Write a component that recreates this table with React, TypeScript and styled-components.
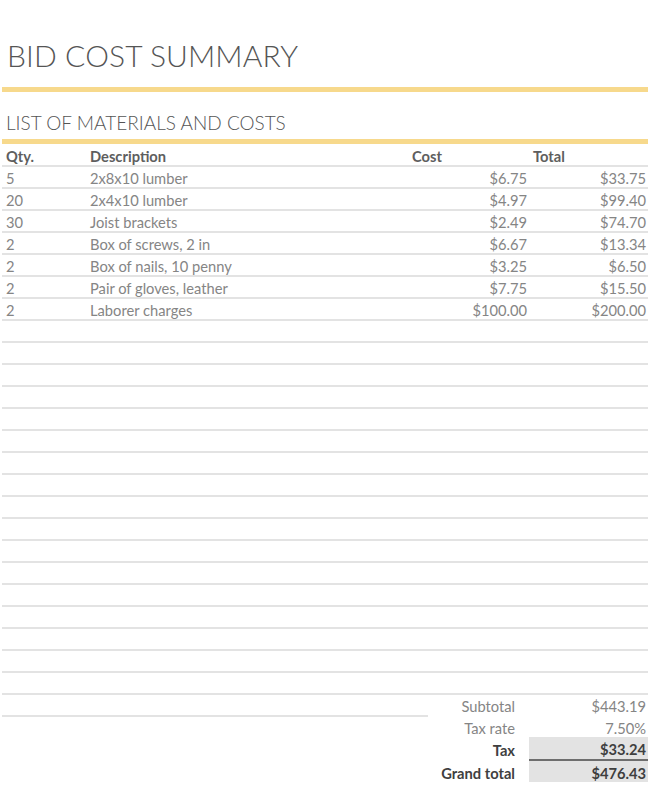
import React from "react";
import styled, { createGlobalStyle } from "styled-components";

const GlobalStyle = createGlobalStyle`
  html, body {
    margin: 0;
    padding: 0;
    background: #ffffff;
  }
  body {
    font-family: "Lato", "Open Sans", "DejaVu Sans", sans-serif;
    color: #808080;
  }
`;

const Page = styled.div`
  width: 646px;
  padding: 0 2px;
  display: flex;
  flex-direction: column;
`;

const Title = styled.h1`
  margin: 0;
  padding: 37px 0 0 5px;
  font-size: 30px;
  line-height: 36px;
  font-weight: 300;
  color: #555555;
  letter-spacing: 0.1px;
`;

const GoldBar = styled.div<{ $gap: number }>`
  height: 5px;
  margin-top: ${(p) => p.$gap}px;
  background: #f7d98c;
`;

const Subtitle = styled.h2`
  margin: 19px 0 0 0;
  padding-left: 4px;
  font-size: 19px;
  line-height: 23px;
  font-weight: 300;
  color: #555555;
`;

const Row = styled.div<{ $head?: boolean }>`
  display: grid;
  grid-template-columns: 84px 322px 121px 119px;
  height: ${(p) => (p.$head ? 21 : 20)}px;
  border-bottom: 2px solid #e3e3e3;
  font-size: 14.7px;
  font-weight: ${(p) => (p.$head ? 700 : 400)};
  color: ${(p) => (p.$head ? "#5e5e5e" : "#858585")};
`;

const Cell = styled.div<{ $right?: boolean }>`
  display: flex;
  align-items: center;
  justify-content: ${(p) => (p.$right ? "flex-end" : "flex-start")};
  padding: 2px 2px 0 4px;
  white-space: nowrap;
`;

const SummaryRow = styled.div<{ $short?: boolean; $h: number }>`
  display: grid;
  grid-template-columns: 527px 119px;
  height: ${(p) => p.$h}px;
  padding-bottom: ${(p) => (p.$short ? 2 : 0)}px;
  background: ${(p) =>
    p.$short
      ? "linear-gradient(#e3e3e3, #e3e3e3) no-repeat left bottom / 426px 2px"
      : "none"};
  font-size: 14.7px;
`;

const SumLabel = styled.div<{ $bold?: boolean }>`
  display: flex;
  align-items: center;
  justify-content: flex-end;
  padding: 2px 14px 0 0;
  font-weight: ${(p) => (p.$bold ? 700 : 400)};
  color: ${(p) => (p.$bold ? "#3f3f3f" : "#858585")};
`;

const SumValue = styled.div<{ $bold?: boolean; $shade?: boolean; $rule?: boolean }>`
  display: flex;
  align-items: center;
  justify-content: flex-end;
  padding: 2px 2px 0 0;
  font-weight: ${(p) => (p.$bold ? 700 : 400)};
  color: ${(p) => (p.$bold ? "#3f3f3f" : "#858585")};
  background: ${(p) => (p.$shade ? "#e3e3e3" : "transparent")};
  border-bottom: ${(p) => (p.$rule ? "2px solid #6e6e6e" : "none")};
`;

const items = [
  { qty: "5", desc: "2x8x10 lumber", cost: "$6.75", total: "$33.75" },
  { qty: "20", desc: "2x4x10 lumber", cost: "$4.97", total: "$99.40" },
  { qty: "30", desc: "Joist brackets", cost: "$2.49", total: "$74.70" },
  { qty: "2", desc: "Box of screws, 2 in", cost: "$6.67", total: "$13.34" },
  { qty: "2", desc: "Box of nails, 10 penny", cost: "$3.25", total: "$6.50" },
  { qty: "2", desc: "Pair of gloves, leather", cost: "$7.75", total: "$15.50" },
  { qty: "2", desc: "Laborer charges", cost: "$100.00", total: "$200.00" },
];

const EMPTY_ROWS = 17;

export default function App() {
  return (
    <>
      <GlobalStyle />
      <Page>
        <Title>BID COST SUMMARY</Title>
        <GoldBar $gap={14} />
        <Subtitle>LIST OF MATERIALS AND COSTS</Subtitle>
        <GoldBar $gap={5} />
        <Row $head>
          <Cell>Qty.</Cell>
          <Cell>Description</Cell>
          <Cell>Cost</Cell>
          <Cell>Total</Cell>
        </Row>
        {items.map((it, i) => (
          <Row key={i}>
            <Cell>{it.qty}</Cell>
            <Cell>{it.desc}</Cell>
            <Cell $right>{it.cost}</Cell>
            <Cell $right>{it.total}</Cell>
          </Row>
        ))}
        {Array.from({ length: EMPTY_ROWS }).map((_, i) => (
          <Row key={`e${i}`}>
            <Cell />
            <Cell />
            <Cell />
            <Cell />
          </Row>
        ))}
        <SummaryRow $short $h={20}>
          <SumLabel>Subtotal</SumLabel>
          <SumValue>$443.19</SumValue>
        </SummaryRow>
        <SummaryRow $h={20}>
          <SumLabel>Tax rate</SumLabel>
          <SumValue>7.50%</SumValue>
        </SummaryRow>
        <SummaryRow $h={24}>
          <SumLabel $bold>Tax</SumLabel>
          <SumValue $bold $shade $rule>$33.24</SumValue>
        </SummaryRow>
        <SummaryRow $h={21}>
          <SumLabel $bold>Grand total</SumLabel>
          <SumValue $bold $shade>$476.43</SumValue>
        </SummaryRow>
      </Page>
    </>
  );
}
